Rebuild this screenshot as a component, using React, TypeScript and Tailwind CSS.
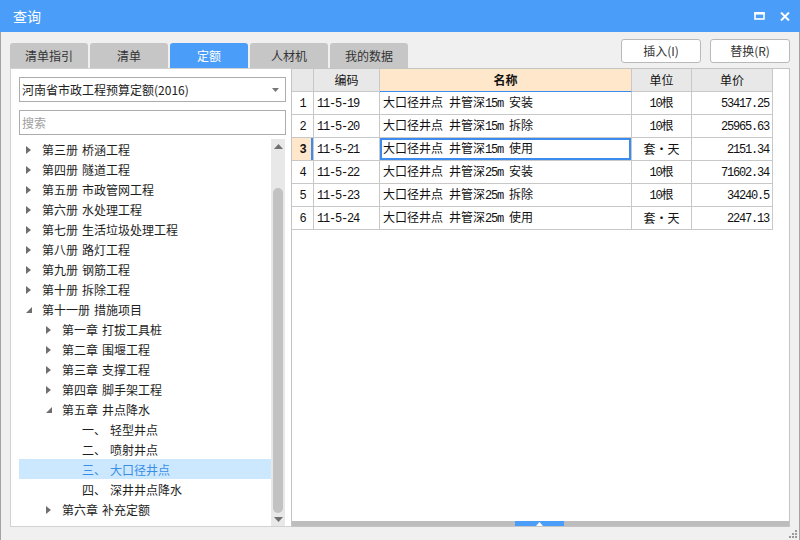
import type { ReactNode } from "react";

type TreeNode = {
  level: 1 | 2 | 3;
  prefix: string;
  name: string;
  state?: "collapsed" | "expanded";
  selected?: boolean;
};

const treeNodes: TreeNode[] = [
  { level: 1, prefix: "第三册", name: "桥涵工程", state: "collapsed" },
  { level: 1, prefix: "第四册", name: "隧道工程", state: "collapsed" },
  { level: 1, prefix: "第五册", name: "市政管网工程", state: "collapsed" },
  { level: 1, prefix: "第六册", name: "水处理工程", state: "collapsed" },
  { level: 1, prefix: "第七册", name: "生活垃圾处理工程", state: "collapsed" },
  { level: 1, prefix: "第八册", name: "路灯工程", state: "collapsed" },
  { level: 1, prefix: "第九册", name: "钢筋工程", state: "collapsed" },
  { level: 1, prefix: "第十册", name: "拆除工程", state: "collapsed" },
  { level: 1, prefix: "第十一册", name: "措施项目", state: "expanded" },
  { level: 2, prefix: "第一章", name: "打拔工具桩", state: "collapsed" },
  { level: 2, prefix: "第二章", name: "围堰工程", state: "collapsed" },
  { level: 2, prefix: "第三章", name: "支撑工程", state: "collapsed" },
  { level: 2, prefix: "第四章", name: "脚手架工程", state: "collapsed" },
  { level: 2, prefix: "第五章", name: "井点降水", state: "expanded" },
  { level: 3, prefix: "一、", name: "轻型井点" },
  { level: 3, prefix: "二、", name: "喷射井点" },
  { level: 3, prefix: "三、", name: "大口径井点", selected: true },
  { level: 3, prefix: "四、", name: "深井井点降水" },
  { level: 2, prefix: "第六章", name: "补充定额", state: "collapsed" },
];

type Row = { no: number; code: string; name: string; unit: string; price: string };

const rows: Row[] = [
  { no: 1, code: "11-5-19", name: "大口径井点 井管深15m 安装", unit: "10根", price: "53417.25" },
  { no: 2, code: "11-5-20", name: "大口径井点 井管深15m 拆除", unit: "10根", price: "25965.63" },
  { no: 3, code: "11-5-21", name: "大口径井点 井管深15m 使用", unit: "套・天", price: "2151.34" },
  { no: 4, code: "11-5-22", name: "大口径井点 井管深25m 安装", unit: "10根", price: "71602.34" },
  { no: 5, code: "11-5-23", name: "大口径井点 井管深25m 拆除", unit: "10根", price: "34240.5" },
  { no: 6, code: "11-5-24", name: "大口径井点 井管深25m 使用", unit: "套・天", price: "2247.13" },
];

const tabs = ["清单指引", "清单", "定额", "人材机", "我的数据"];
const ACTIVE_TAB = "定额";

// SimSun-ish look: ascii runs (spaces included) in a narrow mono, CJK in Noto
function Mixed({ text }: { text: string }) {
  const parts = text.split(/([ 0-9A-Za-z.\-]+)/);
  return (
    <span className="whitespace-pre">
      {parts.map((p, i) =>
        /^[ 0-9A-Za-z.\-]+$/.test(p) ? (
          <span key={i} className="font-['Liberation_Mono',monospace] tracking-[-1.2px]">
            {p}
          </span>
        ) : (
          <span key={i}>{p}</span>
        ),
      )}
    </span>
  );
}

function CollapsedArrow() {
  return (
    <svg width="5" height="8" viewBox="0 0 5 8">
      <path d="M0 0 L5 4 L0 8 Z" fill="#6f6f6f" />
    </svg>
  );
}

function ExpandedArrow() {
  return (
    <svg width="6" height="6" viewBox="0 0 6 6">
      <path d="M6 0 L6 6 L0 6 Z" fill="#6f6f6f" />
    </svg>
  );
}

function TreeRow({ node }: { node: TreeNode }) {
  const pad = node.level === 1 ? "pl-[7px]" : node.level === 2 ? "pl-[27px]" : "pl-[63px]";
  return (
    <div
      className={`flex h-[20px] items-center pt-[2px] ${pad} ${
        node.selected ? "bg-[#cce8ff] text-[#3a8ee6]" : "text-[#1e1e1e]"
      }`}
    >
      {node.state && (
        <span className="flex w-[16px] items-center">
          {node.state === "collapsed" ? <CollapsedArrow /> : <ExpandedArrow />}
        </span>
      )}
      <span>{node.prefix}</span>
      <span className="ml-[4px]">{node.name}</span>
    </div>
  );
}

function Cell({
  children,
  className = "",
}: {
  children?: ReactNode;
  className?: string;
}) {
  return (
    <div
      className={`flex h-[23px] items-center overflow-hidden whitespace-nowrap border-r border-b border-[#c8c8c8] ${className}`}
    >
      {children}
    </div>
  );
}

export default function App() {
  return (
    <div className="flex h-[540px] w-[800px] flex-col bg-[#f0f0f0] font-['Noto_Sans_CJK_SC',sans-serif] text-[12px] text-[#222]">
      {/* title bar */}
      <div className="flex h-[32px] shrink-0 items-center bg-[#4a9df8] pl-[13px] pr-[10px] text-white">
        <span className="text-[14px]">查询</span>
        <div className="ml-auto flex items-center gap-[15px]">
          <svg width="11" height="8" viewBox="0 0 11 8">
            <rect x="1" y="1.5" width="9" height="5.5" fill="none" stroke="#fff" strokeWidth="1.6" />
            <rect x="0.2" y="0" width="10.6" height="2.4" fill="#fff" />
          </svg>
          <svg width="10" height="9" viewBox="0 0 10 9">
            <path d="M1 0.5 L9 8.5 M9 0.5 L1 8.5" stroke="#fff" strokeWidth="2" />
          </svg>
        </div>
      </div>

      {/* body */}
      <div className="relative flex flex-1 flex-col border-x border-b border-[#a3a3a3]">
        <div className="flex h-[36px] shrink-0 pl-[9px] pr-[9px] pt-[7px]">
          <div className="flex gap-[2px] self-end">
            {tabs.map((t) => (
              <div
                key={t}
                className={`flex h-[25px] w-[78px] items-center justify-center rounded-t-[3px] ${
                  t === ACTIVE_TAB ? "bg-[#4a9df8] text-white" : "bg-[#c6c6c6] text-[#333]"
                }`}
              >
                {t}
              </div>
            ))}
          </div>
          <div className="ml-auto flex gap-[9px] self-start">
            <button className="h-[24px] w-[80px] rounded-[3px] border border-[#b9b9b9] bg-white text-[#333]">
              插入(I)
            </button>
            <button className="h-[24px] w-[80px] rounded-[3px] border border-[#b9b9b9] bg-white text-[#333]">
              替换(R)
            </button>
          </div>
        </div>

        <div className="flex min-h-0 flex-1 pb-[13px] pl-[9px] pr-[9px]">
          {/* left panel */}
          <div className="flex w-[281px] flex-col border-y border-l border-[#d2d2d2] bg-white pl-[8px] pr-[5px] pt-[8px]">
            <div className="flex h-[25px] shrink-0 items-center border border-[#acacac] pl-[2px] pr-[6px]">
              <span>河南省市政工程预算定额(2016)</span>
              <svg className="ml-auto" width="7" height="4" viewBox="0 0 7 4">
                <path d="M0 0 L7 0 L3.5 4 Z" fill="#777" />
              </svg>
            </div>
            <div className="mt-[8px] flex h-[25px] shrink-0 items-center border border-[#acacac] pl-[2px] text-[#a0a0a0]">
              搜索
            </div>
            <div className="mt-[4px] flex min-h-0 flex-1">
              <div className="flex-1">
                {treeNodes.map((n) => (
                  <TreeRow key={n.prefix + n.name} node={n} />
                ))}
              </div>
              <div className="mr-[1px] flex w-[14px] flex-col items-center bg-[#e8e8e8]">
                <div className="flex h-[14px] items-center justify-center">
                  <svg width="9" height="5" viewBox="0 0 9 5">
                    <path d="M0 5 L4.5 0 L9 5 Z" fill="#707070" />
                  </svg>
                </div>
                <div className="mt-[35px] h-[325px] w-[10px] rounded-full bg-[#c2c2c2]" />
                <div className="flex h-[13px] items-center justify-center">
                  <svg width="9" height="5" viewBox="0 0 9 5">
                    <path d="M0 0 L9 0 L4.5 5 Z" fill="#707070" />
                  </svg>
                </div>
              </div>
            </div>
          </div>

          {/* right panel */}
          <div className="flex flex-1 flex-col border border-[#c4c4c4] bg-white">
            <div className="grid w-[480px] grid-cols-[22px_66px_252px_60px_81px] text-[#111]">
              <Cell className="bg-[#e8e8e8]" />
              <Cell className="justify-center bg-[#e8e8e8]">编码</Cell>
              <Cell className="justify-center border-b-[#3c8cf0] bg-[#ffe7cb] font-bold">名称</Cell>
              <Cell className="justify-center bg-[#e8e8e8]">单位</Cell>
              <Cell className="justify-center bg-[#e8e8e8]">单价</Cell>
              {rows.map((r) => {
                const sel = r.no === 3;
                return (
                  <div key={r.no} className="contents">
                    <Cell
                      className={`justify-center ${
                        sel ? "bg-[#ffe7cb] font-bold shadow-[inset_-2px_0_0_#3c8cf0]" : ""
                      }`}
                    >
                      <Mixed text={String(r.no)} />
                    </Cell>
                    <Cell className="pl-[3px]">
                      <Mixed text={r.code} />
                    </Cell>
                    <Cell className={`pl-[3px] ${sel ? "shadow-[inset_0_0_0_2px_#3c8cf0]" : ""}`}>
                      <Mixed text={r.name} />
                    </Cell>
                    <Cell className="justify-center">
                      <Mixed text={r.unit} />
                    </Cell>
                    <Cell className="justify-end pr-[3px]">
                      <Mixed text={r.price} />
                    </Cell>
                  </div>
                );
              })}
            </div>
            <div className="mt-auto flex h-[5px] bg-[#bdbdbd]">
              <div className="ml-[223px] flex h-[5px] w-[49px] items-end justify-center bg-[#4a9df8]">
                <svg width="7" height="4" viewBox="0 0 7 4">
                  <path d="M0 4 L3.5 0 L7 4 Z" fill="#fff" />
                </svg>
              </div>
            </div>
          </div>
        </div>

        {/* resize grip */}
        <svg className="absolute bottom-[2px] right-[2px]" width="8" height="8" viewBox="0 0 8 8">
          <rect x="6" y="0" width="2" height="2" fill="#9a9a9a" />
          <rect x="3" y="3" width="2" height="2" fill="#9a9a9a" />
          <rect x="6" y="3" width="2" height="2" fill="#9a9a9a" />
          <rect x="0" y="6" width="2" height="2" fill="#9a9a9a" />
          <rect x="3" y="6" width="2" height="2" fill="#9a9a9a" />
          <rect x="6" y="6" width="2" height="2" fill="#9a9a9a" />
        </svg>
      </div>
    </div>
  );
}
